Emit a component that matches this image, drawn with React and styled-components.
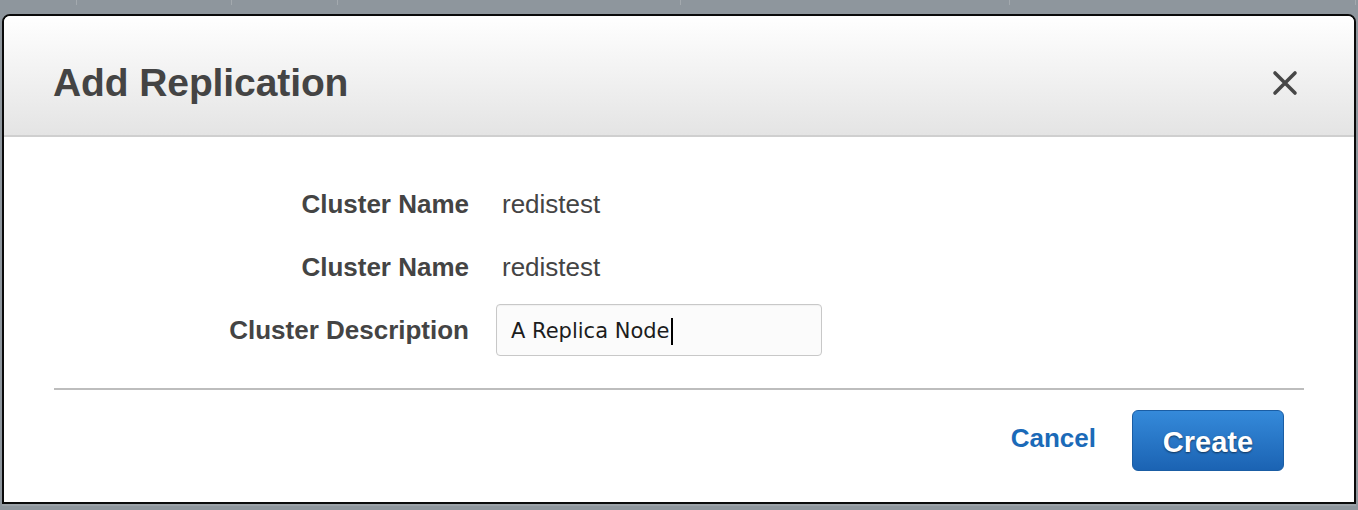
import React from "react";
import styled, { createGlobalStyle } from "styled-components";

const GlobalStyle = createGlobalStyle`
  body {
    margin: 0;
    background: #8e969d;
    font-family: "Liberation Sans", Arial, sans-serif;
  }
`;

const columns = [75, 155, 105, 345, 330, 348];

export default function App() {
  return (
    <>
      <GlobalStyle />
      <Page>
        <TopStrip>
          {columns.map((w, i) => (
            <StripCell key={i} $width={w} />
          ))}
        </TopStrip>
        <Dialog>
          <Header>
            <Title>Add Replication</Title>
            <CloseButton aria-label="Close">
              <svg width="26" height="26" viewBox="0 0 26 26">
                <path
                  d="M3 3 L23 23 M23 3 L3 23"
                  stroke="#474747"
                  strokeWidth="3.6"
                  strokeLinecap="round"
                />
              </svg>
            </CloseButton>
          </Header>
          <Body>
            <Form>
              <Label>Cluster Name</Label>
              <Value>redistest</Value>
              <Label>Cluster Name</Label>
              <Value>redistest</Value>
              <Label>Cluster Description</Label>
              <Field>
                A Replica Node
                <Caret />
              </Field>
            </Form>
            <Divider />
            <Footer>
              <CancelLink>Cancel</CancelLink>
              <CreateButton>Create</CreateButton>
            </Footer>
          </Body>
        </Dialog>
        <BottomStrip />
      </Page>
    </>
  );
}

const Page = styled.div`
  display: flex;
  flex-direction: column;
  padding: 0 2px;
`;

const TopStrip = styled.div`
  display: flex;
  height: 14px;
`;

const StripCell = styled.div`
  width: ${(p) => p.$width}px;
  border-right: 1px solid #a3a9ae;
  height: 5px;
`;

const Dialog = styled.div`
  border: 2px solid #0a0a0a;
  border-radius: 8px 8px 0 0;
  background: #fff;
  overflow: hidden;
`;

const Header = styled.div`
  height: 121px;
  box-sizing: border-box;
  padding: 14px 56px 0 49px;
  display: flex;
  align-items: center;
  justify-content: space-between;
  background: linear-gradient(#ffffff, #e4e4e4);
  border-bottom: 2px solid #cfcfcf;
`;

const Title = styled.h1`
  margin: 0;
  font-size: 39px;
  font-weight: 700;
  color: #444;
  letter-spacing: -0.1px;
`;

const CloseButton = styled.button`
  border: 0;
  padding: 0;
  background: none;
  display: flex;
  cursor: pointer;
`;

const Body = styled.div`
  padding-top: 41px;
`;

const Form = styled.div`
  display: grid;
  grid-template-columns: 465px 326px;
  grid-auto-rows: 52px;
  column-gap: 27px;
  row-gap: 11px;
  align-items: center;
`;

const Label = styled.div`
  text-align: right;
  font-size: 26px;
  font-weight: 700;
  color: #444;
`;

const Value = styled.div`
  padding-left: 6px;
  font-size: 26px;
  color: #444;
`;

const Field = styled.div`
  height: 52px;
  box-sizing: border-box;
  border: 1px solid #c8c8c8;
  border-radius: 4px;
  background: #fbfbfb;
  box-shadow: inset 0 1px 1px rgba(0, 0, 0, 0.04);
  padding: 2px 14px 0;
  display: flex;
  align-items: center;
  font-family: "DejaVu Sans", sans-serif;
  font-size: 21px;
  color: #1c1c1c;
`;

const Caret = styled.span`
  display: inline-block;
  width: 2px;
  height: 27px;
  background: #000;
  margin-left: 1px;
`;

const Divider = styled.div`
  height: 2px;
  background: #bdbdbd;
  margin: 32px 50px 0 50px;
`;

const Footer = styled.div`
  display: flex;
  justify-content: flex-end;
  align-items: center;
  gap: 36px;
  padding: 20px 70px 31px 0;
`;

const CancelLink = styled.a`
  font-size: 26px;
  font-weight: 700;
  color: #1b6ab8;
  cursor: pointer;
  margin-top: -4px;
`;

const CreateButton = styled.button`
  width: 152px;
  height: 61px;
  border: 1px solid #1a5da4;
  border-radius: 6px;
  background: linear-gradient(#358ada, #1b63b3);
  color: #fff;
  font-family: "Liberation Sans", Arial, sans-serif;
  font-size: 29px;
  font-weight: 700;
  padding-top: 4px;
  text-shadow: 0 1px 2px rgba(0, 0, 0, 0.55);
  cursor: pointer;
`;

const BottomStrip = styled.div`
  height: 7px;
  border-top: 2px solid #9aa1a7;
`;
